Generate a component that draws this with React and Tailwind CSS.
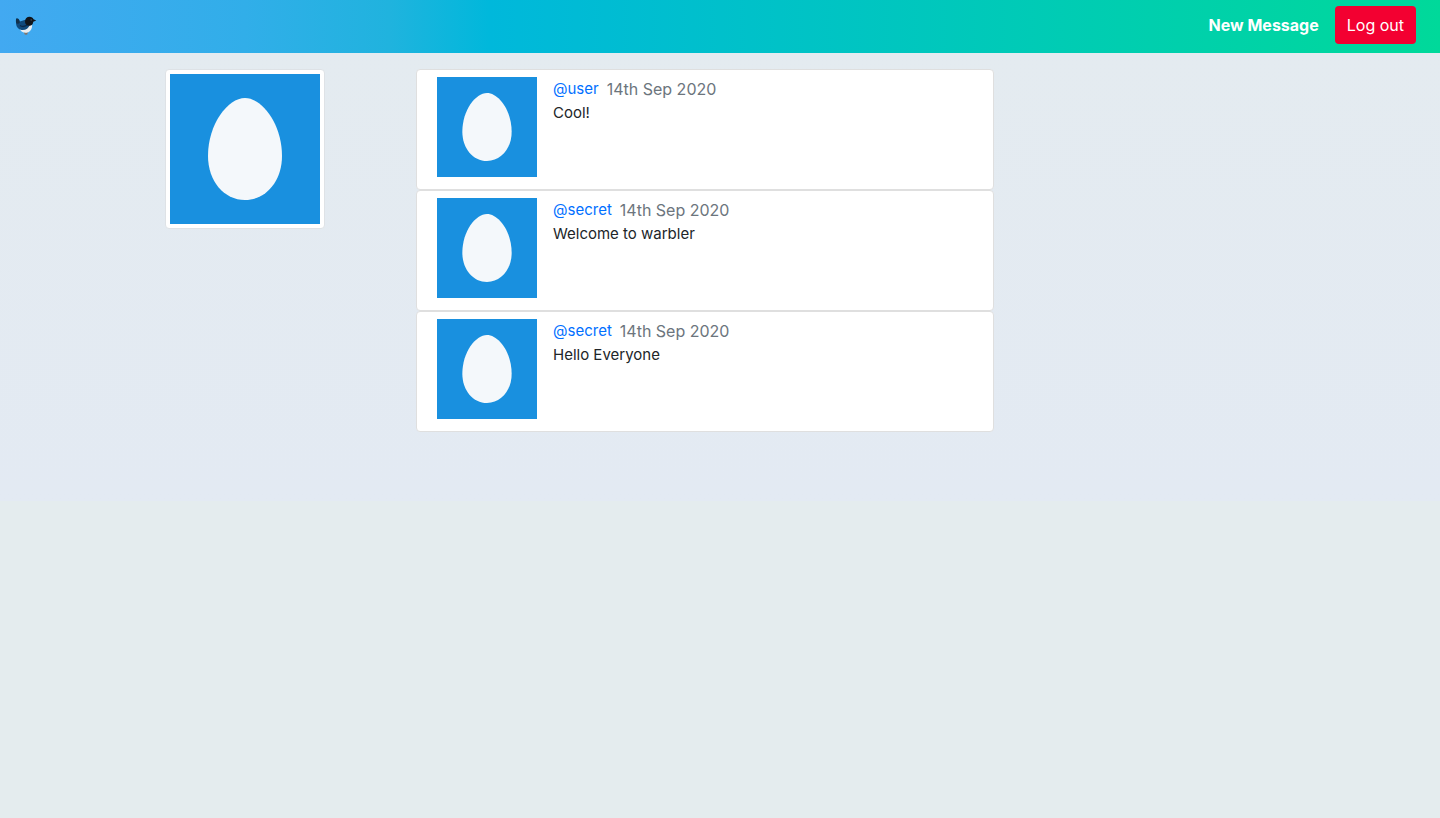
const messages = [
  { id: 3, user: "user", date: "14th Sep 2020", text: "Cool!" },
  { id: 2, user: "secret", date: "14th Sep 2020", text: "Welcome to warbler" },
  { id: 1, user: "secret", date: "14th Sep 2020", text: "Hello Everyone" },
];

function Egg({ className, label }) {
  return (
    <svg viewBox="0 0 150 150" role="img" aria-label={label} className={className}>
      <rect width="150" height="150" fill="#1990df" />
      <path
        d="M75 24C92 24 112 50 112 82C112 107 96 126 75 126C54 126 38 107 38 82C38 50 58 24 75 24Z"
        fill="#f4f8fb"
      />
    </svg>
  );
}

function Bird() {
  return (
    <svg viewBox="0 0 22 20" aria-hidden="true" className="h-5 w-[22px]">
      <path d="M9 14.500l1.500 4M12.500 15l-1 3.500" stroke="#8f6a52" strokeWidth="1.200" fill="none" />
      <path d="M5 13C9 12 12 8 16.500 7C18 10 17 15.500 11.500 16.800C8 17 5.500 15.500 5 13Z" fill="#e9eef1" />
      <path d="M1.500 2.500C3.500 2 4.500 3.500 4.800 5.500C7.500 4.500 9.500 3.800 11.500 4L14.800 9C13.500 12.500 10.500 14.500 6.500 14C2.500 13 1 10 1 6.500C.8 4.500 .8 3 1.500 2.500Z" fill="#104a7c" />
      <path d="M1.500 2.500C3.300 2.200 4.400 3.800 4.800 6.500C3.600 8 2.200 8 1.200 7C.8 4.500 .9 3 1.500 2.500Z" fill="#12304a" />
      <path d="M5 9.500C8 11.500 11 10 13 8.500" stroke="#0b2848" strokeWidth="1.300" fill="none" />
      <path d="M10 5.500C10 2.500 12 .8 14.500 .8C16.600 .8 18 2 18.500 3.300L21.200 4.500L18.300 5.800C18 8.500 16.500 10 14 9.800C11.500 9.500 10 8 10 5.500Z" fill="#10151b" />
      <circle cx="16.200" cy="3.900" r=".6" fill="#5d676f" />
    </svg>
  );
}

function Message({ user, date, text }) {
  return (
    <li className="flex gap-4 rounded border border-[#dfdfdf] bg-white px-5 pt-[7px] pb-3">
      <Egg className="size-[100px] shrink-0" label={user} />
      <div className="min-w-0 text-[15px] leading-6">
        <div className="flex gap-2">
          <a href="#" className="text-[#006fff]">@{user}</a>
          <span className="text-base text-[#6c757d]">{date}</span>
        </div>
        <p>{text}</p>
      </div>
    </li>
  );
}

export default function App() {
  return (
    <div className="flex min-h-screen flex-col bg-[#e4ecee] font-['Inter',sans-serif] text-base text-[#212529]">
      <nav className="flex items-start justify-between bg-[linear-gradient(to_right,#42a9f1,#31aee9_17%,#20b3de_27%,#00b8db_34%,#00d99a)] pt-1.5 pr-6 pb-[7px] pl-[15px]">
        <a href="#" aria-label="Home" className="flex h-10 items-center">
          <Bird />
        </a>
        <div className="flex items-center gap-4">
          <a href="#" className="font-bold text-white">New Message</a>
          <button type="button" className="h-[38px] rounded bg-[#f30031] px-3 text-white">Log out</button>
        </div>
      </nav>
      <main className="bg-linear-to-b from-[#e4ebf0] to-[#e3eaf3] px-4 pt-4 pb-[69px]">
        <div className="mx-auto grid max-w-[1110px] grid-cols-[251fr_578fr_281fr]">
          <aside>
            <div className="w-fit rounded border border-[#dee2e6] bg-white p-1">
              <Egg className="size-[150px]" label="Profile" />
            </div>
          </aside>
          <ul>
            {messages.map((m) => (
              <Message key={m.id} {...m} />
            ))}
          </ul>
        </div>
      </main>
    </div>
  );
}
